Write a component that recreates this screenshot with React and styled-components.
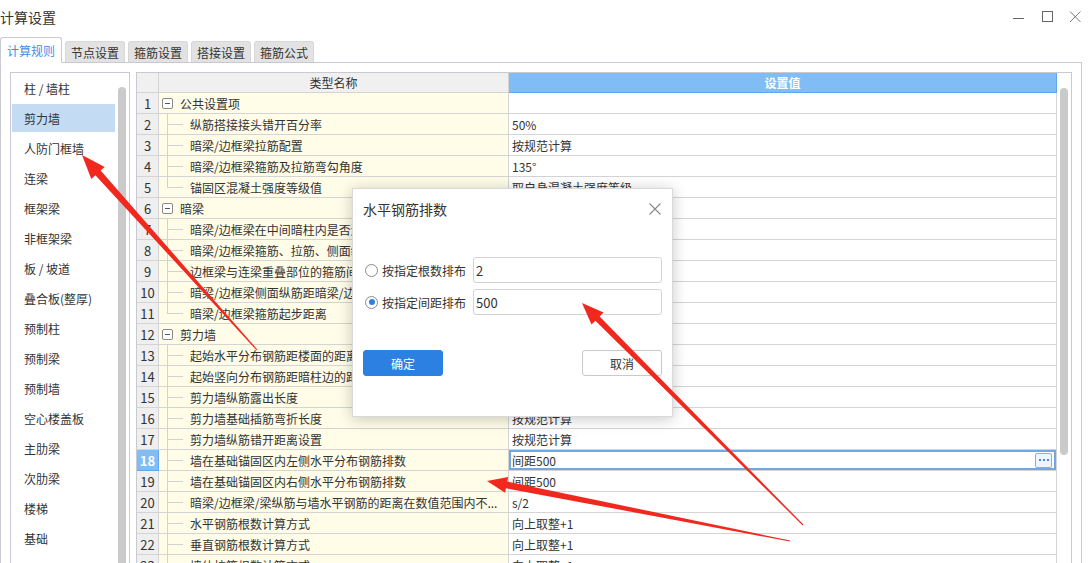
import React from 'react';
import styled, { createGlobalStyle } from 'styled-components';

const GlobalStyle = createGlobalStyle`
  html, body { margin: 0; padding: 0; background: #fff; }
  body { font-family: "Noto Sans CJK SC", "Microsoft YaHei", sans-serif; color: #333; }
  * { box-sizing: border-box; }
`;

const Window = styled.div`
  position: relative;
  width: 1092px;
  height: 563px;
  overflow: hidden;
  background: #fff;
  display: flex;
  flex-direction: column;
`;

const TitleBar = styled.div`
  height: 34px;
  flex: none;
  display: flex;
  align-items: center;
  justify-content: space-between;
`;

const Title = styled.div`
  font-size: 14px;
  line-height: 1;
  color: #333;
`;

const Controls = styled.div`
  display: flex;
  gap: 16px;
  padding-right: 11px;
  svg { display: block; }
`;

const TabBar = styled.div`
  width: 1082px;
  height: 29px;
  flex: none;
  display: flex;
  align-items: flex-end;
  gap: 3px;
  border-bottom: 1px solid #c9c9d1;
`;

const Tab = styled.div`
  position: relative;
  z-index: ${p => (p.$active ? 1 : 0)};
  width: ${p => (p.$active ? 62 : 60)}px;
  height: ${p => (p.$active ? 26 : 21)}px;
  margin-bottom: ${p => (p.$active ? -1 : 0)}px;
  display: flex;
  align-items: center;
  justify-content: center;
  font-size: 12px;
  color: ${p => (p.$active ? '#3d8fe6' : '#333')};
  background: ${p => (p.$active ? '#fff' : '#e2e2e2')};
  border: 1px solid ${p => (p.$active ? '#c9c9d1' : '#d8d8d8')};
  border-bottom: ${p => (p.$active ? '1px solid #fff' : 'none')};
  border-radius: 3px 3px 0 0;
`;

const Panel = styled.div`
  width: 1082px;
  flex: 1;
  min-height: 0;
  border-left: 1px solid #c9c9d1;
  border-right: 1px solid #c9c9d1;
  padding: 9px 9px 0 9px;
  display: flex;
  gap: 6px;
  align-items: stretch;
`;

const Sidebar = styled.div`
  width: 120px;
  flex: none;
  border: 1px solid #c9c9d1;
  border-bottom: none;
  display: flex;
  overflow: hidden;
`;

const NavList = styled.div`
  flex: 1;
  padding: 1px 1px 0;
  display: flex;
  flex-direction: column;
  gap: 2px;
`;

const NavItem = styled.div`
  height: 28px;
  flex: none;
  display: flex;
  align-items: center;
  padding-left: 12px;
  font-size: 12px;
  color: #333;
  white-space: nowrap;
  background: ${p => (p.$active ? '#c4dcf3' : 'transparent')};
`;

const ScrollTrack = styled.div`
  width: ${p => p.$w}px;
  flex: none;
  padding-top: ${p => p.$top}px;
  padding-left: ${p => p.$left}px;
  display: flex;
  flex-direction: column;
`;

const ScrollThumb = styled.div`
  width: 8px;
  background: #cacaca;
  border-radius: ${p => (p.$full ? '4px 4px 0 0' : '4px')};
  flex: ${p => (p.$full ? 1 : 'none')};
  height: ${p => (p.$h ? `${p.$h}px` : 'auto')};
`;

const TableWrap = styled.div`
  width: 936px;
  flex: none;
  border: 1px solid #c9c9d1;
  border-bottom: none;
  display: flex;
  overflow: hidden;
`;

const Grid = styled.div`
  width: 920px;
  flex: none;
  display: grid;
  grid-template-columns: 22px 350px 548px;
  grid-template-rows: 20px;
  grid-auto-rows: 21px;
  align-content: start;
`;

const HeadCell = styled.div`
  display: flex;
  align-items: center;
  justify-content: center;
  font-size: 12px;
  background: ${p => (p.$blue ? '#80bdf7' : '#f0f0f0')};
  color: ${p => (p.$blue ? '#fff' : '#333')};
  font-weight: ${p => (p.$blue ? 700 : 400)};
  border-right: 1px solid ${p => (p.$blue ? '#62a6ee' : '#d4d4d4')};
  border-bottom: 1px solid ${p => (p.$blue ? '#62a6ee' : '#d4d4d4')};
`;

const NumCell = styled.div`
  display: flex;
  align-items: center;
  justify-content: center;
  font-size: 13px;
  background: ${p => (p.$sel ? '#80bdf7' : '#efefef')};
  color: ${p => (p.$sel ? '#fff' : '#333')};
  font-weight: ${p => (p.$sel ? 700 : 400)};
  border-right: 1px solid ${p => (p.$sel ? '#62a6ee' : '#d4d4d4')};
  border-bottom: 1px solid ${p => (p.$sel ? '#62a6ee' : '#d4d4d4')};
`;

const NameCell = styled.div`
  display: flex;
  align-items: stretch;
  padding-left: 3px;
  padding-right: 8px;
  background: #fffce8;
  border-right: 1px solid #d4d4d4;
  border-bottom: 1px solid #d4d4d4;
  font-size: 12px;
  color: #333;
  overflow: hidden;
`;

const Toggle = styled.span`
  position: relative;
  align-self: center;
  width: 11px;
  height: 11px;
  flex: none;
  border: 1px solid #8a8a8a;
  border-radius: 2px;
  background: #fff;
  margin-right: 7px;
  &::after {
    content: '';
    position: absolute;
    left: 2px;
    top: 4px;
    width: 5px;
    height: 1px;
    background: #555;
  }
`;

const Connector = styled.span`
  position: relative;
  width: 16px;
  flex: none;
  margin-left: 5px;
  margin-right: 7px;
  &::before {
    content: '';
    position: absolute;
    left: 0;
    top: -1px;
    width: 1px;
    height: ${p => (p.$last ? '11px' : 'calc(100% + 2px)')};
    background: #d2d2d2;
  }
  &::after {
    content: '';
    position: absolute;
    left: 0;
    top: 10px;
    width: 16px;
    height: 1px;
    background: #d2d2d2;
  }
`;

const NameText = styled.span`
  align-self: center;
  white-space: nowrap;
  overflow: hidden;
  text-overflow: ellipsis;
`;

const ValueCell = styled.div`
  display: flex;
  align-items: center;
  justify-content: space-between;
  padding-left: 3px;
  padding-right: 4px;
  font-size: 12px;
  color: #333;
  background: #fff;
  border-right: 1px solid #d4d4d4;
  border-bottom: 1px solid #d4d4d4;
  box-shadow: ${p => (p.$sel ? 'inset 0 0 0 2px #6fa8e3' : 'none')};
  white-space: nowrap;
`;

const MoreButton = styled.span`
  width: 17px;
  height: 15px;
  border: 1px solid #7fb2e8;
  border-radius: 2px;
  background: #eef5fd;
  display: flex;
  align-items: center;
  justify-content: center;
  gap: 2px;
  i {
    width: 2px;
    height: 2px;
    background: #3a8ee6;
  }
`;

const Dialog = styled.div`
  position: absolute;
  left: 352px;
  top: 188px;
  width: 321px;
  height: 229px;
  z-index: 5;
  background: #fff;
  border: 1px solid #d9d9d9;
  box-shadow: 0 2px 14px rgba(0, 0, 0, 0.22);
  display: flex;
  flex-direction: column;
`;

const DialogHeader = styled.div`
  height: 40px;
  flex: none;
  display: flex;
  align-items: center;
  justify-content: space-between;
  padding: 0 11px 0 10px;
  svg { display: block; }
`;

const DialogTitle = styled.div`
  font-size: 14px;
  color: #333;
`;

const DialogBody = styled.div`
  padding: 28px 10px 0 12px;
  display: flex;
  flex-direction: column;
  gap: 6px;
`;

const OptionRow = styled.div`
  height: 26px;
  display: flex;
  align-items: center;
`;

const Radio = styled.span`
  width: 13px;
  height: 13px;
  flex: none;
  border-radius: 50%;
  border: 1px solid #8c8c8c;
  background: #fff;
  display: flex;
  align-items: center;
  justify-content: center;
  margin-right: 4px;
  &::after {
    content: '';
    width: 6px;
    height: 6px;
    border-radius: 50%;
    background: ${p => (p.$checked ? '#2f80e0' : 'transparent')};
  }
`;

const OptionLabel = styled.span`
  font-size: 12px;
  color: #333;
  width: 91px;
  flex: none;
  white-space: nowrap;
`;

const TextInput = styled.div`
  flex: 1;
  height: 100%;
  border: 1px solid #d3d3d3;
  border-radius: 3px;
  display: flex;
  align-items: center;
  padding-left: 2px;
  font-size: 13px;
  color: #333;
`;

const DialogFooter = styled.div`
  margin-top: 35px;
  padding: 0 10px;
  display: flex;
  justify-content: space-between;
`;

const Button = styled.div`
  width: 80px;
  height: 26px;
  border-radius: 3px;
  display: flex;
  align-items: center;
  justify-content: center;
  font-size: 12px;
  background: ${p => (p.$primary ? '#2c80e1' : '#fff')};
  color: ${p => (p.$primary ? '#fff' : '#333')};
  border: 1px solid ${p => (p.$primary ? '#2c80e1' : '#c9c9c9')};
`;

const Annotations = styled.svg`
  position: absolute;
  left: 0;
  top: 0;
  z-index: 10;
  pointer-events: none;
`;

const navItems = [
  '柱 / 墙柱', '剪力墙', '人防门框墙', '连梁', '框架梁', '非框架梁', '板 / 坡道', '叠合板(整厚)',
  '预制柱', '预制梁', '预制墙', '空心楼盖板', '主肋梁', '次肋梁', '楼梯', '基础',
];

const rows = [
  { g: true, name: '公共设置项', value: '' },
  { name: '纵筋搭接接头错开百分率', value: '50%' },
  { name: '暗梁/边框梁拉筋配置', value: '按规范计算' },
  { name: '暗梁/边框梁箍筋及拉筋弯勾角度', value: '135°' },
  { name: '锚固区混凝土强度等级值', value: '取自身混凝土强度等级', last: true },
  { g: true, name: '暗梁', value: '' },
  { name: '暗梁/边框梁在中间暗柱内是否连续通过', value: '是' },
  { name: '暗梁/边框梁箍筋、拉筋、侧面纵筋是否计算', value: '是' },
  { name: '边框梁与连梁重叠部位的箍筋间距', value: '按连梁' },
  { name: '暗梁/边框梁侧面纵筋距暗梁/边框梁边距离', value: '15' },
  { name: '暗梁/边框梁箍筋起步距离', value: '50', last: true },
  { g: true, name: '剪力墙', value: '' },
  { name: '起始水平分布钢筋距楼面的距离', value: '50' },
  { name: '起始竖向分布钢筋距暗柱边的距离', value: 's' },
  { name: '剪力墙纵筋露出长度', value: '按规范计算' },
  { name: '剪力墙基础插筋弯折长度', value: '按规范计算' },
  { name: '剪力墙纵筋错开距离设置', value: '按规范计算' },
  { name: '墙在基础锚固区内左侧水平分布钢筋排数', value: '间距500', sel: true },
  { name: '墙在基础锚固区内右侧水平分布钢筋排数', value: '间距500' },
  { name: '暗梁/边框梁/梁纵筋与墙水平钢筋的距离在数值范围内不...', value: 's/2' },
  { name: '水平钢筋根数计算方式', value: '向上取整+1' },
  { name: '垂直钢筋根数计算方式', value: '向上取整+1' },
  { name: '墙体拉筋根数计算方式', value: '向上取整+1' },
];

function arrowPoints(tail, tip, headLen, headW, shaftW, tailW) {
  const [tx, ty] = tail;
  const [hx, hy] = tip;
  const dx = hx - tx;
  const dy = hy - ty;
  const L = Math.hypot(dx, dy);
  const ux = dx / L;
  const uy = dy / L;
  const nx = -uy;
  const ny = ux;
  const bx = hx - ux * headLen;
  const by = hy - uy * headLen;
  const pts = [
    [tx + (nx * tailW) / 2, ty + (ny * tailW) / 2],
    [bx + (nx * shaftW) / 2, by + (ny * shaftW) / 2],
    [bx + (nx * headW) / 2, by + (ny * headW) / 2],
    [hx, hy],
    [bx - (nx * headW) / 2, by - (ny * headW) / 2],
    [bx - (nx * shaftW) / 2, by - (ny * shaftW) / 2],
    [tx - (nx * tailW) / 2, ty - (ny * tailW) / 2],
  ];
  return pts.map(p => `${p[0].toFixed(1)},${p[1].toFixed(1)}`).join(' ');
}

const arrows = [
  { tail: [257, 350], tip: [82, 155], headLen: 24, headW: 18, shaftW: 7 },
  { tail: [803, 525], tip: [582, 303], headLen: 22, headW: 17, shaftW: 6 },
  { tail: [790, 541], tip: [487, 481], headLen: 20, headW: 16, shaftW: 7 },
];

export default function App() {
  return (
    <>
      <GlobalStyle />
      <Window>
        <TitleBar>
          <Title>计算设置</Title>
          <Controls>
            <svg width="12" height="12" viewBox="0 0 12 12">
              <line x1="0" y1="7.5" x2="11" y2="7.5" stroke="#666" strokeWidth="1" />
            </svg>
            <svg width="12" height="12" viewBox="0 0 12 12">
              <rect x="1.5" y="0.5" width="10" height="10" fill="none" stroke="#666" strokeWidth="1" />
            </svg>
            <svg width="12" height="12" viewBox="0 0 12 12">
              <path d="M1 0.5 L11.5 11 M11.5 0.5 L1 11" stroke="#777" strokeWidth="1" fill="none" />
            </svg>
          </Controls>
        </TitleBar>

        <TabBar>
          <Tab $active>计算规则</Tab>
          <Tab>节点设置</Tab>
          <Tab>箍筋设置</Tab>
          <Tab>搭接设置</Tab>
          <Tab>箍筋公式</Tab>
        </TabBar>

        <Panel>
          <Sidebar>
            <NavList>
              {navItems.map((n, i) => (
                <NavItem key={n} $active={i === 1}>{n}</NavItem>
              ))}
            </NavList>
            <ScrollTrack $w={13} $top={14} $left={2}>
              <ScrollThumb $full />
            </ScrollTrack>
          </Sidebar>

          <TableWrap>
            <Grid>
              <HeadCell />
              <HeadCell>类型名称</HeadCell>
              <HeadCell $blue>设置值</HeadCell>
              {rows.map((r, i) => (
                <React.Fragment key={i}>
                  <NumCell $sel={r.sel}>{i + 1}</NumCell>
                  <NameCell>
                    {r.g ? <Toggle /> : <Connector $last={r.last} />}
                    <NameText>{r.name}</NameText>
                  </NameCell>
                  <ValueCell $sel={r.sel}>
                    <span>{r.value}</span>
                    {r.sel && (
                      <MoreButton><i /><i /><i /></MoreButton>
                    )}
                  </ValueCell>
                </React.Fragment>
              ))}
            </Grid>
            <ScrollTrack $w={14} $top={15} $left={3}>
              <ScrollThumb $h={367} />
            </ScrollTrack>
          </TableWrap>
        </Panel>

        <Dialog>
          <DialogHeader>
            <DialogTitle>水平钢筋排数</DialogTitle>
            <svg width="12" height="12" viewBox="0 0 12 12">
              <path d="M0.5 0.5 L11.5 11.5 M11.5 0.5 L0.5 11.5" stroke="#888" strokeWidth="1.1" fill="none" />
            </svg>
          </DialogHeader>
          <DialogBody>
            <OptionRow>
              <Radio />
              <OptionLabel>按指定根数排布</OptionLabel>
              <TextInput>2</TextInput>
            </OptionRow>
            <OptionRow>
              <Radio $checked />
              <OptionLabel>按指定间距排布</OptionLabel>
              <TextInput>500</TextInput>
            </OptionRow>
          </DialogBody>
          <DialogFooter>
            <Button $primary>确定</Button>
            <Button>取消</Button>
          </DialogFooter>
        </Dialog>

        <Annotations width="1092" height="563" viewBox="0 0 1092 563">
          {arrows.map((a, i) => (
            <polygon
              key={i}
              points={arrowPoints(a.tail, a.tip, a.headLen, a.headW, a.shaftW, 1)}
              fill="#f0281e"
            />
          ))}
        </Annotations>
      </Window>
    </>
  );
}
